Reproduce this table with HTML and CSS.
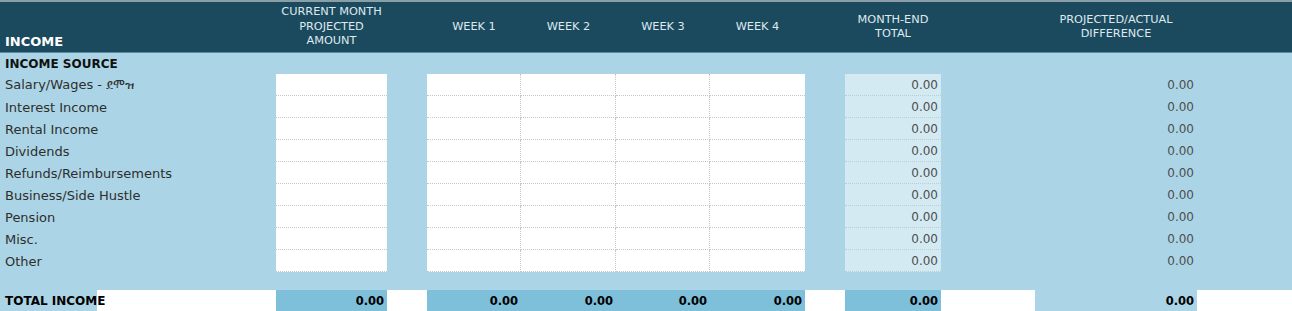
FILE: index.html
```html
<!DOCTYPE html>
<html lang="en">
<head>
<meta charset="utf-8">
<title>Income</title>
<link rel="stylesheet" href="styles.css">
</head>
<body>
<div class="sheet">
  <div class="row head">
    <div class="c lbl h-income">INCOME</div>
    <div class="c hc">CURRENT MONTH<br>PROJECTED<br>AMOUNT</div>
    <div class="c"></div>
    <div class="c hc">WEEK 1</div>
    <div class="c hc">WEEK 2</div>
    <div class="c hc">WEEK 3</div>
    <div class="c hc">WEEK 4</div>
    <div class="c"></div>
    <div class="c hc">MONTH-END<br>TOTAL</div>
    <div class="c"></div>
    <div class="c hc">PROJECTED/ACTUAL<br>DIFFERENCE</div>
    <div class="c"></div>
  </div>

  <div class="row sub">
    <div class="c lbl bold">INCOME SOURCE</div>
  </div>

  <div class="rows">
    <div class="row data">
      <div class="c lbl">Salary/Wages - ደሞዝ</div>
      <div class="c in"></div><div class="c"></div>
      <div class="c in wk"></div><div class="c in wk"></div><div class="c in wk"></div><div class="c in"></div>
      <div class="c"></div>
      <div class="c me num">0.00</div><div class="c"></div>
      <div class="c num diff">0.00</div><div class="c"></div>
    </div>
    <div class="row data">
      <div class="c lbl">Interest Income</div>
      <div class="c in"></div><div class="c"></div>
      <div class="c in wk"></div><div class="c in wk"></div><div class="c in wk"></div><div class="c in"></div>
      <div class="c"></div>
      <div class="c me num">0.00</div><div class="c"></div>
      <div class="c num diff">0.00</div><div class="c"></div>
    </div>
    <div class="row data">
      <div class="c lbl">Rental Income</div>
      <div class="c in"></div><div class="c"></div>
      <div class="c in wk"></div><div class="c in wk"></div><div class="c in wk"></div><div class="c in"></div>
      <div class="c"></div>
      <div class="c me num">0.00</div><div class="c"></div>
      <div class="c num diff">0.00</div><div class="c"></div>
    </div>
    <div class="row data">
      <div class="c lbl">Dividends</div>
      <div class="c in"></div><div class="c"></div>
      <div class="c in wk"></div><div class="c in wk"></div><div class="c in wk"></div><div class="c in"></div>
      <div class="c"></div>
      <div class="c me num">0.00</div><div class="c"></div>
      <div class="c num diff">0.00</div><div class="c"></div>
    </div>
    <div class="row data">
      <div class="c lbl">Refunds/Reimbursements</div>
      <div class="c in"></div><div class="c"></div>
      <div class="c in wk"></div><div class="c in wk"></div><div class="c in wk"></div><div class="c in"></div>
      <div class="c"></div>
      <div class="c me num">0.00</div><div class="c"></div>
      <div class="c num diff">0.00</div><div class="c"></div>
    </div>
    <div class="row data">
      <div class="c lbl">Business/Side Hustle</div>
      <div class="c in"></div><div class="c"></div>
      <div class="c in wk"></div><div class="c in wk"></div><div class="c in wk"></div><div class="c in"></div>
      <div class="c"></div>
      <div class="c me num">0.00</div><div class="c"></div>
      <div class="c num diff">0.00</div><div class="c"></div>
    </div>
    <div class="row data">
      <div class="c lbl">Pension</div>
      <div class="c in"></div><div class="c"></div>
      <div class="c in wk"></div><div class="c in wk"></div><div class="c in wk"></div><div class="c in"></div>
      <div class="c"></div>
      <div class="c me num">0.00</div><div class="c"></div>
      <div class="c num diff">0.00</div><div class="c"></div>
    </div>
    <div class="row data">
      <div class="c lbl">Misc.</div>
      <div class="c in"></div><div class="c"></div>
      <div class="c in wk"></div><div class="c in wk"></div><div class="c in wk"></div><div class="c in"></div>
      <div class="c"></div>
      <div class="c me num">0.00</div><div class="c"></div>
      <div class="c num diff">0.00</div><div class="c"></div>
    </div>
    <div class="row data">
      <div class="c lbl">Other</div>
      <div class="c in"></div><div class="c"></div>
      <div class="c in wk"></div><div class="c in wk"></div><div class="c in wk"></div><div class="c in"></div>
      <div class="c"></div>
      <div class="c me num">0.00</div><div class="c"></div>
      <div class="c num diff">0.00</div><div class="c"></div>
    </div>
  </div>

  <div class="row blank"></div>

  <div class="row total">
    <div class="c lbl bold tl">TOTAL INCOME</div>
    <div class="c tv">0.00</div>
    <div class="c tw"></div>
    <div class="c tv">0.00</div>
    <div class="c tv">0.00</div>
    <div class="c tv">0.00</div>
    <div class="c tv">0.00</div>
    <div class="c tw"></div>
    <div class="c tv">0.00</div>
    <div class="c tw"></div>
    <div class="c tv td">0.00</div>
    <div class="c tw"></div>
  </div>
</div>
</body>
</html>
```

FILE: styles.css
```css
* { box-sizing: border-box; }

html, body {
  margin: 0;
  padding: 0;
  background: #ffffff;
}

body {
  font-family: "DejaVu Sans", "Noto Sans", sans-serif;
  color: #262626;
  width: 1292px;
  height: 311px;
  overflow: hidden;
}

.sheet {
  width: 1292px;
}

.row {
  display: grid;
  grid-template-columns: 97px 179px 111px 40px 94px 95px 94px 95px 40px 96px 94px 162px 95px;
}

.c {
  min-width: 0;
  white-space: nowrap;
}

/* header */
.head {
  height: 53px;
  background: #1b4a5e;
  border-top: 2px solid #8a9ea7;
  border-bottom: 1px solid #5a8a9e;
  color: #dfe9ee;
}

.hc {
  display: flex;
  align-items: center;
  justify-content: center;
  text-align: center;
  font-size: 11.3px;
  line-height: 14.5px;
}

.h-income {
  display: flex;
  align-items: flex-end;
  font-weight: bold;
  font-size: 12.5px;
  color: #ffffff;
  padding-left: 5px;
  padding-bottom: 3px;
}

/* body */
.sub, .data, .blank {
  background: #abd5e6;
}

.sub {
  height: 21px;
}

.sub .lbl {
  display: flex;
  align-items: center;
}

.lbl {
  grid-column: span 2;
  padding-left: 5px;
  font-size: 13px;
}

.bold {
  font-weight: bold;
  font-size: 12px;
  color: #111111;
}

.data {
  height: 22px;
}

.data .c {
  display: flex;
  align-items: center;
}

.data .lbl {
  color: #2e2e2e;
}

.in {
  background: #ffffff;
  border-bottom: 1px dotted #c6c6c6;
}

.wk {
  border-right: 1px dotted #c6c6c6;
}

.me {
  background: #d4eaf3;
  border-bottom: 1px dotted #c0ccd0;
}

.num {
  justify-content: flex-end;
  font-size: 12px;
  color: #4d4d4d;
  padding-right: 3px;
}

.blank {
  height: 18px;
}

/* total */
.total {
  height: 21px;
  background: #ffffff;
}

.total .c {
  display: flex;
  align-items: center;
}

.tl {
  background: linear-gradient(to right, #abd5e6 0, #abd5e6 97px, #ffffff 97px);
  color: #000000;
}

.tv {
  background: #7ebfda;
  justify-content: flex-end;
  font-weight: bold;
  font-size: 11.5px;
  color: #000000;
  padding-right: 3px;
}

.td {
  background: #abd5e6;
}

.tw {
  background: #ffffff;
}
```
